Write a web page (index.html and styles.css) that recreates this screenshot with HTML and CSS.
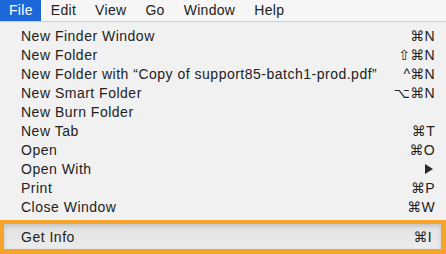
FILE: index.html
```html
<!DOCTYPE html>
<html>
<head>
<meta charset="utf-8">
<link rel="stylesheet" href="styles.css">
</head>
<body>
<div class="menubar">
  <div class="mb-item active">File</div>
  <div class="mb-item">Edit</div>
  <div class="mb-item">View</div>
  <div class="mb-item">Go</div>
  <div class="mb-item">Window</div>
  <div class="mb-item">Help</div>
</div>
<div class="menu">
  <div class="row"><span>New Finder Window</span><span class="key">⌘N</span></div>
  <div class="row"><span>New Folder</span><span class="key">⇧⌘N</span></div>
  <div class="row"><span>New Folder with “Copy of support85-batch1-prod.pdf”</span><span class="key">^⌘N</span></div>
  <div class="row"><span>New Smart Folder</span><span class="key">⌥⌘N</span></div>
  <div class="row"><span>New Burn Folder</span><span class="key"></span></div>
  <div class="row"><span>New Tab</span><span class="key">⌘T</span></div>
  <div class="row"><span>Open</span><span class="key">⌘O</span></div>
  <div class="row"><span>Open With</span><span class="key arrow"><svg width="8" height="10" viewBox="0 0 8 10"><path d="M0 0 L8 5 L0 10 Z" fill="#2a2a2a"/></svg></span></div>
  <div class="row"><span>Print</span><span class="key">⌘P</span></div>
  <div class="row"><span>Close Window</span><span class="key">⌘W</span></div>
  <div class="sep"></div>
  <div class="frame">
    <div class="row hl"><span>Get Info</span><span class="key">⌘I</span></div>
  </div>
</div>
</body>
</html>
```
FILE: styles.css
```css
html, body {
  margin: 0;
  padding: 0;
  width: 446px;
  height: 254px;
  overflow: hidden;
  background: #f1f1f1;
  font-family: "Liberation Sans", "DejaVu Sans", Arial, sans-serif;
  font-size: 14px;
  color: #222;
}
.menubar {
  display: flex;
  height: 21px;
  background: #f6f6f6;
  border-bottom: 1px solid #cfcfcf;
  letter-spacing: 0.3px;
}
.mb-item {
  padding: 0 9px 0 9px;
  margin-right: 1px;
  line-height: 21px;
  color: #222;
}
.mb-item.active {
  background: #1c68d9;
  color: #fff;
  padding: 0 8px 0 9px;
  margin-right: 1px;
}
.menu {
  padding-top: 4px;
  letter-spacing: 0.5px;
}
.row {
  display: flex;
  justify-content: space-between;
  align-items: center;
  height: 19px;
  padding: 0 11px 0 21px;
}
.key {
  font-family: "Liberation Sans", "DejaVu Sans", sans-serif;
  letter-spacing: 0.3px;
}
.arrow {
  display: flex;
  align-items: center;
  padding-right: 2px;
}
.sep {
  height: 4px;
}
.frame {
  border: 4px solid #f7a42a;
  border-bottom-width: 5px;
  border-right-width: 5px;
}
.row.hl {
  height: 25px;
  padding: 0 9px 0 17px;
  background: linear-gradient(#e2e2e2, #ececec);
  box-shadow: inset 0 2px 4px rgba(0,0,0,0.15);
}
```
